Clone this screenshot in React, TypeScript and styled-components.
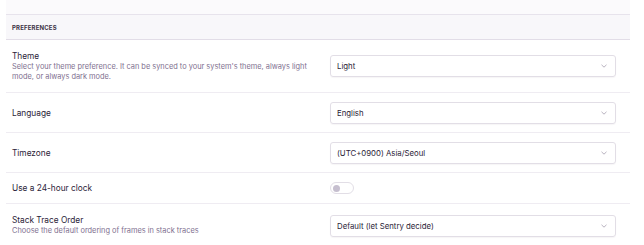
import styled, { createGlobalStyle } from "styled-components";

const GlobalStyle = createGlobalStyle`
  body {
    margin: 0;
    background: #ffffff;
    font-family: Inter, "Open Sans", sans-serif;
    color: #2b1d38;
  }
`;

const Page = styled.div`
  width: 644px;
  height: 245px;
  overflow: hidden;
  padding: 0 14px 0 6px;
  box-sizing: border-box;
`;

const Above = styled.div`
  height: 14px;
  background: #fbfafc;
`;

const Panel = styled.section`
  border-top: 1px solid #e7e3ec;
`;

const PanelHeader = styled.header`
  height: 24px;
  display: flex;
  align-items: center;
  padding: 0 6px;
  background: #f8f7fa;
  border-bottom: 1px solid #e2dde7;
  font-size: 6px;
  font-weight: 700;
  letter-spacing: 0.03em;
  text-transform: uppercase;
  color: #3e3446;
`;

const Row = styled.div<{ $height: number }>`
  display: grid;
  grid-template-columns: 1fr 286px;
  column-gap: 12px;
  align-items: center;
  height: ${(p) => p.$height}px;
  padding: 0 14px 0 6px;
  box-sizing: border-box;

  & + & {
    border-top: 1px solid #efecf2;
  }
`;

const Label = styled.div`
  strong {
    display: block;
    font-size: 8.3px;
    font-weight: 400;
    color: #2b1d38;
  }

  span {
    display: block;
    margin-top: 1px;
    font-size: 7.4px;
    line-height: 10px;
    color: #80708f;
  }
`;

const Select = styled.div`
  height: 22px;
  display: flex;
  align-items: center;
  justify-content: space-between;
  padding: 0 8px 0 6px;
  border: 1px solid #e2dee6;
  border-radius: 3px;
  box-shadow: 0 1px 1px rgba(43, 29, 56, 0.04);
  box-sizing: border-box;
  font-size: 7.8px;
  color: #2b1d38;
`;

const Switch = styled.div`
  width: 24px;
  height: 12px;
  border: 1px solid #e2dee6;
  border-radius: 6px;
  box-sizing: border-box;
  display: flex;
  align-items: center;
  padding-left: 2px;

  &::before {
    content: "";
    width: 7px;
    height: 7px;
    border-radius: 50%;
    background: #c6bfcf;
  }
`;

function Chevron() {
  return (
    <svg width="6" height="4" viewBox="0 0 6 4" fill="none">
      <path d="M0.5 0.8 L3 3.2 L5.5 0.8" stroke="#9a90a4" strokeWidth="0.7" />
    </svg>
  );
}

const rows = [
  {
    title: "Theme",
    help: "Select your theme preference. It can be synced to your system's theme, always light mode, or always dark mode.",
    value: "Light",
    height: 52,
  },
  { title: "Language", value: "English", height: 40 },
  { title: "Timezone", value: "(UTC+0900) Asia/Seoul", height: 40 },
  { title: "Use a 24-hour clock", toggle: true, height: 31 },
  {
    title: "Stack Trace Order",
    help: "Choose the default ordering of frames in stack traces",
    value: "Default (let Sentry decide)",
    height: 44,
  },
];

export default function App() {
  return (
    <Page>
      <GlobalStyle />
      <Above />
      <Panel>
        <PanelHeader>Preferences</PanelHeader>
        {rows.map((row) => (
          <Row key={row.title} $height={row.height}>
            <Label>
              <strong>{row.title}</strong>
              {row.help && <span>{row.help}</span>}
            </Label>
            {row.toggle ? (
              <Switch />
            ) : (
              <Select>
                {row.value}
                <Chevron />
              </Select>
            )}
          </Row>
        ))}
      </Panel>
    </Page>
  );
}
